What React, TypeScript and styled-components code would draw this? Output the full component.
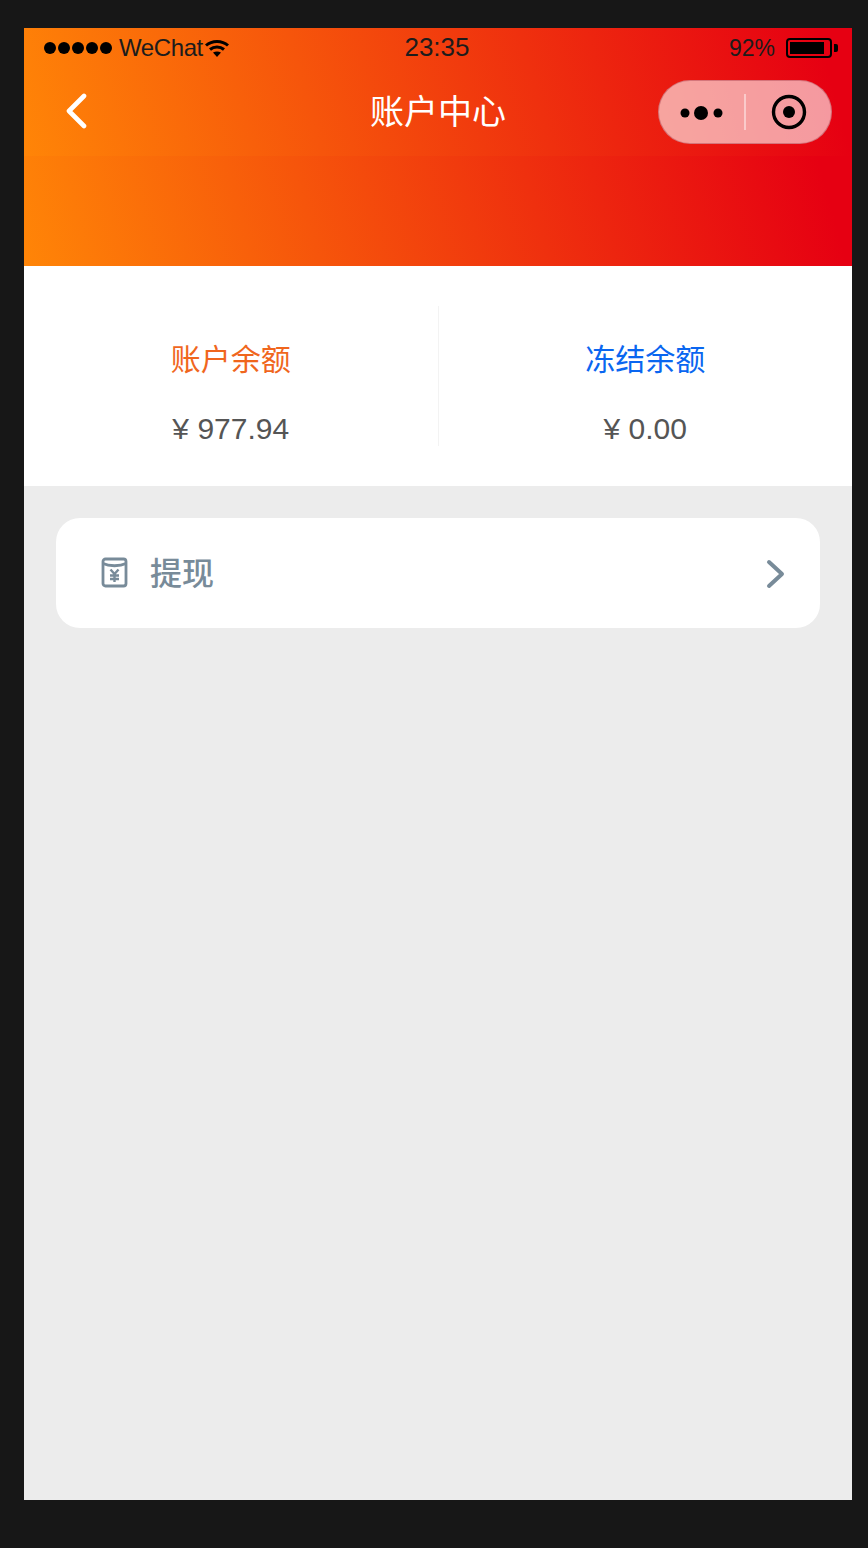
import { createGlobalStyle, styled } from "styled-components";

const GlobalStyle = createGlobalStyle`
  html, body {
    margin: 0;
    padding: 0;
    background: #171717;
  }
  body {
    font-family: "Liberation Sans", "Noto Sans CJK SC", sans-serif;
  }
`;

const Screen = styled.div`
  box-sizing: border-box;
  width: 868px;
  height: 1548px;
  padding: 28px 16px 48px 24px;
`;

const Phone = styled.div`
  width: 828px;
  height: 1472px;
  display: flex;
  flex-direction: column;
  background: #ececec;
`;

const Header = styled.div`
  height: 128px;
  background: linear-gradient(75deg, #ff8507 0%, #e60012 96%);
`;

const StatusBar = styled.div`
  height: 40px;
  display: grid;
  grid-template-columns: 1fr auto 1fr;
  align-items: center;
  padding: 0 14px 0 20px;
  color: #1c1c1c;
  font-size: 24px;
`;

const StatusLeft = styled.div`
  display: flex;
  align-items: center;
`;

const Signal = styled.div`
  display: flex;
  gap: 2px;
  margin-right: 7px;
`;

const SignalDot = styled.span`
  width: 12px;
  height: 12px;
  border-radius: 50%;
  background: #000;
`;

const Carrier = styled.span`
  letter-spacing: -0.4px;
  margin-right: 2px;
`;

const Clock = styled.div`
  font-size: 26px;
  margin: -2px 8px 0 0;
`;

const StatusRight = styled.div`
  display: flex;
  align-items: center;
  justify-content: flex-end;
  gap: 11px;
  font-size: 23px;
`;

const NavBar = styled.div`
  height: 88px;
  display: flex;
  align-items: center;
  justify-content: space-between;
  padding: 0 20px 0 40px;
  position: relative;
`;

const NavTitle = styled.div`
  position: absolute;
  left: 0;
  right: 0;
  text-align: center;
  color: #fff;
  font-size: 34px;
  line-height: 88px;
`;

const Capsule = styled.div`
  box-sizing: border-box;
  width: 174px;
  height: 64px;
  border-radius: 32px;
  border: 1.5px solid rgba(190, 90, 100, 0.6);
  background: rgba(255, 255, 255, 0.6);
  display: flex;
  align-items: center;
`;

const CapsuleSlot = styled.div`
  flex: 1;
  height: 36px;
  display: flex;
  align-items: center;
  justify-content: center;
`;

const CapsuleDivider = styled.div`
  width: 2px;
  height: 36px;
  background: rgba(255, 255, 255, 0.45);
`;

const Banner = styled.div`
  height: 110px;
  background: linear-gradient(75deg, #ff8507 0%, #e60012 96%);
`;

const Summary = styled.div`
  box-sizing: border-box;
  height: 220px;
  padding: 40px 0;
  background: #fff;
  display: flex;
`;

const SummaryCell = styled.div<{ $divided?: boolean }>`
  flex: 1;
  display: flex;
  flex-direction: column;
  align-items: center;
  padding-top: 34px;
  border-right: ${(p) => (p.$divided ? "1px solid #f3f3f3" : "none")};
`;

const SummaryLabel = styled.div<{ $color: string }>`
  color: ${(p) => p.$color};
  font-size: 30px;
  line-height: 40px;
`;

const SummaryValue = styled.div`
  color: #555;
  font-size: 30px;
  line-height: 40px;
  margin-top: 29px;
`;

const ActionCard = styled.div`
  height: 110px;
  margin: 32px 32px 0;
  padding: 0 34px 0 44px;
  background: #fff;
  border-radius: 24px;
  display: flex;
  align-items: center;
`;

const ActionLabel = styled.div`
  flex: 1;
  margin: -4px 0 0 20px;
  color: #788b99;
  font-size: 32px;
  font-weight: 500;
`;

const ArrowIcon = styled.svg`
  margin-top: 2px;
`;

export default function App() {
  return (
    <Screen>
      <GlobalStyle />
      <Phone>
        <Header>
          <StatusBar>
            <StatusLeft>
              <Signal>
                {[0, 1, 2, 3, 4].map((i) => (
                  <SignalDot key={i} />
                ))}
              </Signal>
              <Carrier>WeChat</Carrier>
              <svg width="24" height="18" viewBox="0 0 24 18" fill="none" stroke="#000" strokeWidth="3">
                <path d="M1 6.5C7 1 17 1 23 6.5" />
                <path d="M5 10.5C9 7 15 7 19 10.5" />
                <path d="M12 18L8 13.5C10.5 12 13.5 12 16 13.5Z" fill="#000" stroke="none" />
              </svg>
            </StatusLeft>
            <Clock>23:35</Clock>
            <StatusRight>
              92%
              <svg width="52" height="20" viewBox="0 0 52 20">
                <rect x="1" y="1" width="44" height="18" rx="3" fill="none" stroke="#000" strokeWidth="2" />
                <rect x="4" y="4" width="34" height="12" fill="#000" />
                <path d="M48 6h2a2 2 0 0 1 2 2v4a2 2 0 0 1-2 2h-2z" fill="#000" />
              </svg>
            </StatusRight>
          </StatusBar>
          <NavBar>
            <svg width="26" height="38" viewBox="0 0 26 38" fill="none" stroke="#fff" strokeWidth="4.6" strokeLinecap="round" strokeLinejoin="round">
              <path d="M20 3L5 18L20 33" />
            </svg>
            <NavTitle>账户中心</NavTitle>
            <Capsule>
              <CapsuleSlot>
                <svg width="44" height="18" viewBox="0 0 44 18" fill="#000">
                  <circle cx="5" cy="10" r="4.5" />
                  <circle cx="21" cy="10" r="7" />
                  <circle cx="38" cy="10" r="4.5" />
                </svg>
              </CapsuleSlot>
              <CapsuleDivider />
              <CapsuleSlot>
                <svg width="36" height="36" viewBox="0 0 36 36">
                  <circle cx="18" cy="18" r="15.5" fill="none" stroke="#000" strokeWidth="3.4" />
                  <circle cx="18" cy="18" r="6" fill="#000" />
                </svg>
              </CapsuleSlot>
            </Capsule>
          </NavBar>
        </Header>
        <Banner />
        <Summary>
          <SummaryCell $divided>
            <SummaryLabel $color="#f0661d">账户余额</SummaryLabel>
            <SummaryValue>¥ 977.94</SummaryValue>
          </SummaryCell>
          <SummaryCell>
            <SummaryLabel $color="#0a66f0">冻结余额</SummaryLabel>
            <SummaryValue>¥ 0.00</SummaryValue>
          </SummaryCell>
        </Summary>
        <ActionCard>
          <svg width="30" height="32" viewBox="0 0 30 32" fill="none" stroke="#788b99" strokeWidth="2.8" strokeLinejoin="round">
            <rect x="3" y="2" width="23" height="27" rx="2.5" />
            <path d="M3 6.5C9 9.5 20 9.5 26 6.5" />
            <path d="M10.5 12.5l4 4.5 4-4.5M14.5 17v8M10 18.5h9M10 22h9" strokeWidth="2.4" />
          </svg>
          <ActionLabel>提现</ActionLabel>
          <ArrowIcon width="20" height="30" viewBox="0 0 20 30" fill="none" stroke="#788b99" strokeWidth="4" strokeLinecap="round" strokeLinejoin="round">
            <path d="M3 3L16 15L3 27" />
          </ArrowIcon>
        </ActionCard>
      </Phone>
    </Screen>
  );
}
